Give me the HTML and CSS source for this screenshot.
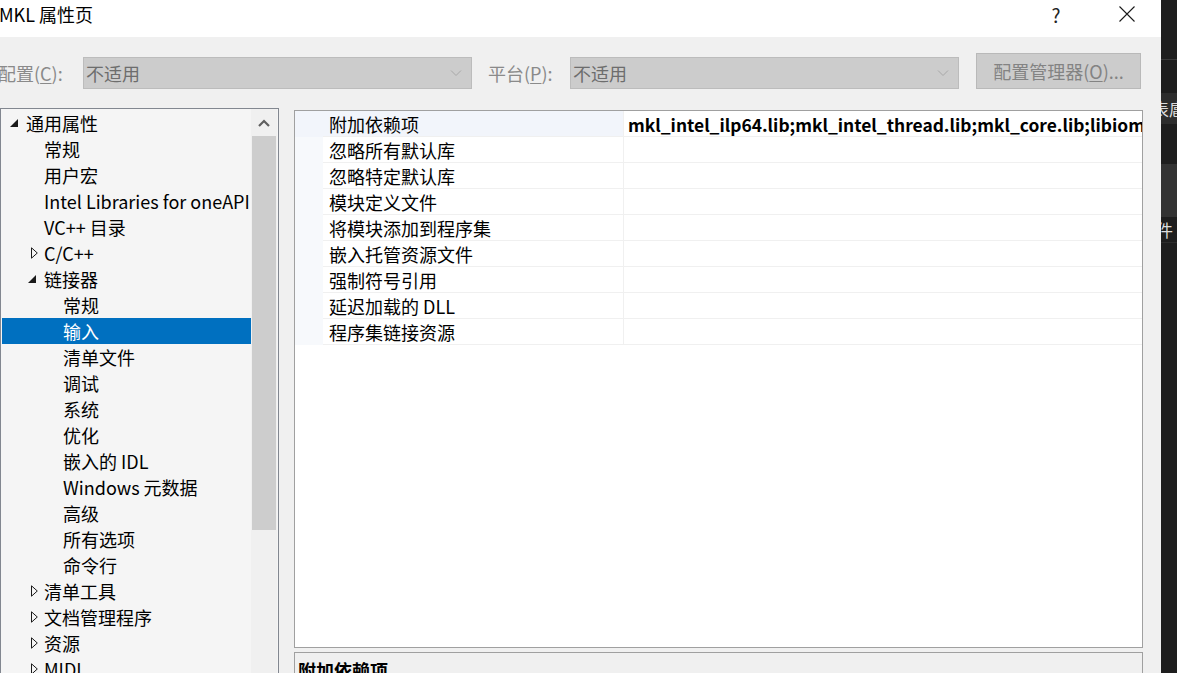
FILE: index.html
```html
<!DOCTYPE html>
<html lang="zh-CN">
<head>
<meta charset="utf-8">
<title>MKL 属性页</title>
<link rel="stylesheet" href="styles.css">
</head>
<body>
<div class="screen">
  <div class="dialog">
    <div class="titlebar">
      <span class="title">MKL 属性页</span>
      <span class="help">?</span>
      <span class="close"><svg width="18" height="18" viewBox="0 0 18 18"><path d="M1.5 1.5 L16.5 16.5 M16.5 1.5 L1.5 16.5" stroke="#1a1a1a" stroke-width="1.1" fill="none"/></svg></span>
    </div>
    <div class="body">
      <div class="toolbar">
        <span class="lbl lbl-config">配置(<u>C</u>):</span>
        <div class="combo"><span class="combo-text">不适用</span><svg class="chev" width="12" height="8" viewBox="0 0 12 8"><path d="M1 1.5 L6 6.5 L11 1.5" stroke="#a8a8a8" stroke-width="1" fill="none"/></svg></div>
        <span class="lbl lbl-platform">平台(<u>P</u>):</span>
        <div class="combo"><span class="combo-text">不适用</span><svg class="chev" width="12" height="8" viewBox="0 0 12 8"><path d="M1 1.5 L6 6.5 L11 1.5" stroke="#a8a8a8" stroke-width="1" fill="none"/></svg></div>
        <div class="btn">配置管理器(<u>O</u>)...</div>
      </div>
      <div class="main">
        <div class="tree">
          <div class="tree-list">
            <div class="node l0"><span class="arr"><svg width="10" height="10" viewBox="0 0 10 10"><path d="M9 1 L9 9 L1 9 Z" fill="#1a1a1a"/></svg></span><span class="txt">通用属性</span></div>
            <div class="node l1"><span class="arr"></span><span class="txt">常规</span></div>
            <div class="node l1"><span class="arr"></span><span class="txt">用户宏</span></div>
            <div class="node l1"><span class="arr"></span><span class="txt">Intel Libraries for oneAPI</span></div>
            <div class="node l1"><span class="arr"></span><span class="txt">VC++ 目录</span></div>
            <div class="node l1"><span class="arr arr-c"><svg width="10" height="12" viewBox="0 0 10 12"><path d="M2.5 0.8 L8.3 6 L2.5 11.2 Z" fill="none" stroke="#1a1a1a" stroke-width="1"/></svg></span><span class="txt">C/C++</span></div>
            <div class="node l1"><span class="arr"><svg width="10" height="10" viewBox="0 0 10 10"><path d="M9 1 L9 9 L1 9 Z" fill="#1a1a1a"/></svg></span><span class="txt">链接器</span></div>
            <div class="node l2"><span class="arr"></span><span class="txt">常规</span></div>
            <div class="node l2 sel"><span class="arr"></span><span class="txt">输入</span></div>
            <div class="node l2"><span class="arr"></span><span class="txt">清单文件</span></div>
            <div class="node l2"><span class="arr"></span><span class="txt">调试</span></div>
            <div class="node l2"><span class="arr"></span><span class="txt">系统</span></div>
            <div class="node l2"><span class="arr"></span><span class="txt">优化</span></div>
            <div class="node l2"><span class="arr"></span><span class="txt">嵌入的 IDL</span></div>
            <div class="node l2"><span class="arr"></span><span class="txt">Windows 元数据</span></div>
            <div class="node l2"><span class="arr"></span><span class="txt">高级</span></div>
            <div class="node l2"><span class="arr"></span><span class="txt">所有选项</span></div>
            <div class="node l2"><span class="arr"></span><span class="txt">命令行</span></div>
            <div class="node l1"><span class="arr arr-c"><svg width="10" height="12" viewBox="0 0 10 12"><path d="M2.5 0.8 L8.3 6 L2.5 11.2 Z" fill="none" stroke="#1a1a1a" stroke-width="1"/></svg></span><span class="txt">清单工具</span></div>
            <div class="node l1"><span class="arr arr-c"><svg width="10" height="12" viewBox="0 0 10 12"><path d="M2.5 0.8 L8.3 6 L2.5 11.2 Z" fill="none" stroke="#1a1a1a" stroke-width="1"/></svg></span><span class="txt">文档管理程序</span></div>
            <div class="node l1"><span class="arr arr-c"><svg width="10" height="12" viewBox="0 0 10 12"><path d="M2.5 0.8 L8.3 6 L2.5 11.2 Z" fill="none" stroke="#1a1a1a" stroke-width="1"/></svg></span><span class="txt">资源</span></div>
            <div class="node l1"><span class="arr arr-c"><svg width="10" height="12" viewBox="0 0 10 12"><path d="M2.5 0.8 L8.3 6 L2.5 11.2 Z" fill="none" stroke="#1a1a1a" stroke-width="1"/></svg></span><span class="txt">MIDL</span></div>
          </div>
          <div class="vscroll">
            <div class="sb-up"><svg width="12" height="8" viewBox="0 0 12 8"><path d="M1 7 L6 2 L11 7" stroke="#606060" stroke-width="2.2" fill="none"/></svg></div>
            <div class="sb-thumb"></div>
          </div>
        </div>
        <div class="right">
          <div class="grid">
            <div class="prow first"><span class="gut"></span><span class="pname">附加依赖项</span><span class="pval">mkl_intel_ilp64.lib;mkl_intel_thread.lib;mkl_core.lib;libiomp5md.lib;%(AdditionalDependencies)</span></div>
            <div class="prow"><span class="gut"></span><span class="pname">忽略所有默认库</span><span class="pval"></span></div>
            <div class="prow"><span class="gut"></span><span class="pname">忽略特定默认库</span><span class="pval"></span></div>
            <div class="prow"><span class="gut"></span><span class="pname">模块定义文件</span><span class="pval"></span></div>
            <div class="prow"><span class="gut"></span><span class="pname">将模块添加到程序集</span><span class="pval"></span></div>
            <div class="prow"><span class="gut"></span><span class="pname">嵌入托管资源文件</span><span class="pval"></span></div>
            <div class="prow"><span class="gut"></span><span class="pname">强制符号引用</span><span class="pval"></span></div>
            <div class="prow"><span class="gut"></span><span class="pname">延迟加载的 DLL</span><span class="pval"></span></div>
            <div class="prow"><span class="gut"></span><span class="pname">程序集链接资源</span><span class="pval"></span></div>
          </div>
          <div class="desc"><div class="desc-title">附加依赖项</div></div>
        </div>
      </div>
    </div>
  </div>
  <div class="side">
    <div class="s-top"></div>
    <div class="s-gap"></div>
    <div class="s-tab"><span class="s-clip1">表扈</span></div>
    <div class="s-paren"><span class="s-clip2">)</span></div>
    <div class="s-block"></div>
    <div class="s-file"><span class="s-clip3">件</span></div>
    <div class="s-rest"></div>
  </div>
</div>
</body>
</html>
```

FILE: styles.css
```css
html, body {
  margin: 0;
  padding: 0;
}
body {
  width: 1177px;
  height: 673px;
  overflow: hidden;
  font-family: "Noto Sans CJK SC", "Noto Sans", sans-serif;
  font-size: 18px;
  color: #000;
  background: #1e1e1e;
}
.screen {
  display: flex;
  width: 1177px;
  height: 673px;
  overflow: hidden;
}
.dialog {
  width: 1161px;
  flex: none;
  display: flex;
  flex-direction: column;
  background: #f0f0f0;
  overflow: hidden;
}
.titlebar {
  height: 37px;
  flex: none;
  background: #fff;
  display: flex;
  align-items: center;
}
.title {
  flex: 1;
  margin-left: -1px;
  margin-top: -9px;
  font-size: 18px;
  color: #000;
}
.help {
  width: 20px;
  text-align: center;
  margin-top: -9px;
  margin-right: 52px;
  font-size: 19px;
  color: #222;
}
.close {
  width: 18px;
  height: 18px;
  margin-top: -9px;
  margin-right: 25px;
  display: flex;
}
.body {
  flex: 1;
  display: flex;
  flex-direction: column;
}
.toolbar {
  margin-top: 16px;
  height: 36px;
  display: flex;
  align-items: flex-end;
}
.lbl {
  height: 32px;
  line-height: 32px;
  color: #8a8a8a;
  font-size: 18px;
  white-space: nowrap;
}
.lbl u {
  text-underline-offset: 2px;
}
.lbl-config {
  width: 83px;
  margin-left: -2px;
  flex: none;
}
.lbl-platform {
  width: 82px;
  margin-left: 16px;
  flex: none;
}
.combo {
  width: 389px;
  height: 32px;
  box-sizing: border-box;
  flex: none;
  border: 1px solid #bcbcbc;
  background: #cccccc;
  display: flex;
  align-items: center;
  justify-content: space-between;
  padding: 0 9px 0 2px;
}
.combo:first-of-type {
  margin-left: 2px;
}
.combo-text {
  color: #6d6d6d;
  font-size: 18px;
  line-height: 30px;
}
.chev {
  display: block;
}
.btn {
  width: 165px;
  height: 36px;
  box-sizing: border-box;
  flex: none;
  margin-left: 17px;
  border: 1px solid #b9b9b9;
  background: #cccccc;
  color: #838383;
  font-size: 18px;
  line-height: 34px;
  text-align: center;
}
.btn u {
  text-underline-offset: 2px;
}
.main {
  margin-top: 19px;
  display: flex;
  align-items: flex-start;
}
.tree {
  width: 279px;
  height: 600px;
  flex: none;
  box-sizing: border-box;
  border: 1px solid #828790;
  background: #f5f5f5;
  display: flex;
}
.tree-list {
  width: 250px;
  flex: none;
  padding-top: 1px;
  overflow: hidden;
}
.node {
  height: 26px;
  line-height: 26px;
  margin-left: 1px;
  display: flex;
  align-items: center;
  white-space: nowrap;
  font-size: 18px;
  color: #000;
}
.node .arr {
  width: 17px;
  height: 26px;
  flex: none;
  display: flex;
  align-items: center;
}
.node .arr-c {
  padding-left: 2px;
  width: 15px;
}
.node .txt {
  line-height: 26px;
}
.l0 { padding-left: 7px; }
.l1 { padding-left: 25px; }
.l2 { padding-left: 44px; }
.sel {
  background: #0070c0;
  color: #fff;
}
.vscroll {
  width: 26px;
  flex: none;
  background: #f0f0f0;
  display: flex;
  flex-direction: column;
}
.sb-up {
  height: 27px;
  display: flex;
  align-items: center;
  justify-content: center;
}
.sb-thumb {
  margin-left: 1px;
  width: 24px;
  height: 394px;
  background: #cdcdcd;
}
.right {
  margin-left: 15px;
  width: 849px;
  flex: none;
  display: flex;
  flex-direction: column;
}
.grid {
  margin-top: 2px;
  height: 538px;
  box-sizing: border-box;
  border: 1px solid #a0a0a0;
  background: #fff;
  display: flex;
  flex-direction: column;
}
.prow {
  height: 26px;
  display: flex;
  flex: none;
}
.gut {
  width: 28px;
  flex: none;
  background: #f7f9fc;
}
.pname {
  width: 294px;
  flex: none;
  padding-left: 6px;
  border-bottom: 1px solid #f0f0f0;
  border-right: 1px solid #f0f0f0;
  line-height: 27px;
  font-size: 18px;
  white-space: nowrap;
  color: #000;
}
.pval {
  flex: 1;
  padding-left: 4px;
  border-bottom: 1px solid #f0f0f0;
  line-height: 27px;
  font-size: 17.4px;
  font-weight: bold;
  white-space: nowrap;
  overflow: hidden;
  color: #000;
}
.first .gut,
.first .pname {
  background: #f2f5fb;
}
.desc {
  margin-top: 4px;
  height: 60px;
  box-sizing: border-box;
  border: 1px solid #a0a0a0;
  background: #f0f0f0;
}
.desc-title {
  padding: 4px 0 0 3px;
  font-weight: bold;
  font-size: 18px;
  line-height: 26px;
}
.side {
  width: 16px;
  flex: none;
  background: #1e1e1e;
  display: flex;
  flex-direction: column;
  overflow: hidden;
  color: #dcdcdc;
  font-size: 17px;
}
.s-top {
  height: 59px;
  border-bottom: 1px solid #3a3a3a;
}
.s-gap {
  height: 33px;
}
.s-tab {
  height: 31px;
  background: #2d2d2d;
  line-height: 31px;
  white-space: nowrap;
  overflow: hidden;
}
.s-clip1 { margin-left: -9px; }
.s-paren {
  height: 40px;
  line-height: 40px;
  white-space: nowrap;
  overflow: hidden;
  color: #9a9a9a;
}
.s-clip2 { margin-left: -5px; }
.s-block {
  height: 53px;
  background: #333333;
}
.s-file {
  height: 25px;
  line-height: 25px;
  border-bottom: 1px solid #2d2d2d;
  white-space: nowrap;
  overflow: hidden;
}
.s-clip3 { margin-left: -5px; }
.s-rest {
  flex: 1;
}
```
